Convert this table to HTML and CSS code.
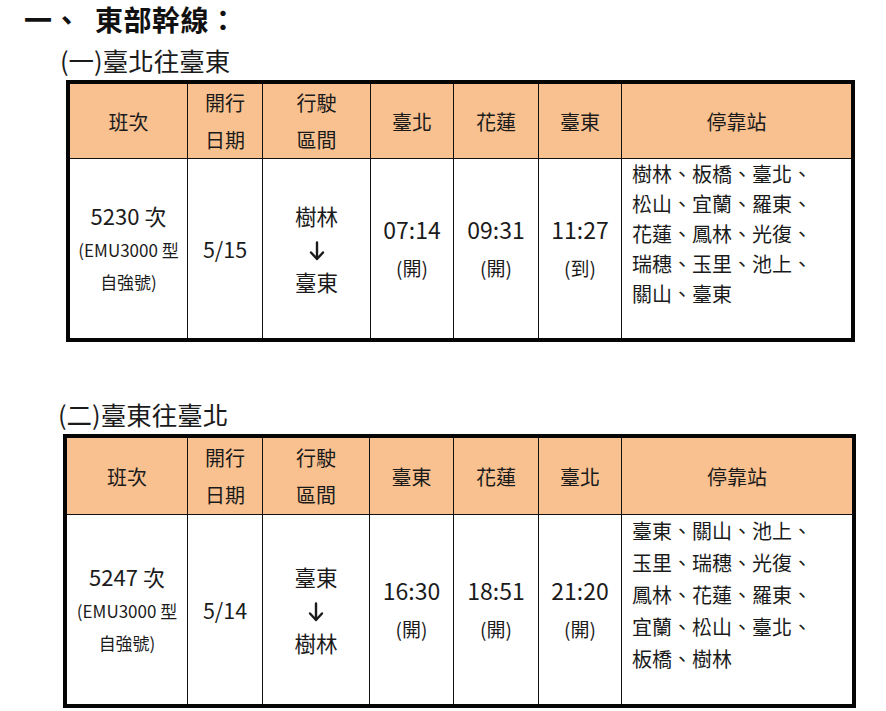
FILE: index.html
```html
<!DOCTYPE html>
<html lang="zh-Hant">
<head>
<meta charset="utf-8">
<link rel="stylesheet" href="styles.css">
</head>
<body>
<div class="page">
  <h1 class="title"><span class="num">一、</span>東部幹線：</h1>
  <h2 class="sub sub1">(一)臺北往臺東</h2>
  <table class="tt t1">
    <colgroup><col class="c1"><col class="c2"><col class="c3"><col class="c4"><col class="c5"><col class="c6"><col class="c7"></colgroup>
    <thead>
      <tr>
        <th>班次</th><th class="two">開行<br>日期</th><th class="two">行駛<br>區間</th><th>臺北</th><th>花蓮</th><th>臺東</th><th>停靠站</th>
      </tr>
    </thead>
    <tbody>
      <tr>
        <td class="train"><span class="tno">5230 次</span><br><span class="ttype">(EMU3000 型<br>自強號)</span></td>
        <td class="date">5/15</td>
        <td class="route">樹林<br><svg class="arr" width="16" height="20" viewBox="0 0 16 20" aria-hidden="true"><path d="M8 1.5V18M2 11.5L8 18L14 11.5" fill="none" stroke="#1b1b1b" stroke-width="2.4" stroke-linecap="round" stroke-linejoin="round"/></svg><br>臺東</td>
        <td class="time"><span class="hm">07:14</span><br><span class="kind">(開)</span></td>
        <td class="time"><span class="hm">09:31</span><br><span class="kind">(開)</span></td>
        <td class="time"><span class="hm">11:27</span><br><span class="kind">(到)</span></td>
        <td class="stops">樹林、板橋、臺北、<br>松山、宜蘭、羅東、<br>花蓮、鳳林、光復、<br>瑞穗、玉里、池上、<br>關山、臺東</td>
      </tr>
    </tbody>
  </table>
  <h2 class="sub sub2">(二)臺東往臺北</h2>
  <table class="tt t2">
    <colgroup><col class="c1"><col class="c2"><col class="c3"><col class="c4"><col class="c5"><col class="c6"><col class="c7"></colgroup>
    <thead>
      <tr>
        <th>班次</th><th class="two">開行<br>日期</th><th class="two">行駛<br>區間</th><th>臺東</th><th>花蓮</th><th>臺北</th><th>停靠站</th>
      </tr>
    </thead>
    <tbody>
      <tr>
        <td class="train train2"><span class="tno">5247 次</span><br><span class="ttype">(EMU3000 型<br>自強號)</span></td>
        <td class="date">5/14</td>
        <td class="route">臺東<br><svg class="arr" width="16" height="20" viewBox="0 0 16 20" aria-hidden="true"><path d="M8 1.5V18M2 11.5L8 18L14 11.5" fill="none" stroke="#1b1b1b" stroke-width="2.4" stroke-linecap="round" stroke-linejoin="round"/></svg><br>樹林</td>
        <td class="time time2"><span class="hm">16:30</span><br><span class="kind">(開)</span></td>
        <td class="time time2"><span class="hm">18:51</span><br><span class="kind">(開)</span></td>
        <td class="time time2"><span class="hm">21:20</span><br><span class="kind">(開)</span></td>
        <td class="stops">臺東、關山、池上、<br>玉里、瑞穗、光復、<br>鳳林、花蓮、羅東、<br>宜蘭、松山、臺北、<br>板橋、樹林</td>
      </tr>
    </tbody>
  </table>
</div>
</body>
</html>
```

FILE: styles.css
```css
html, body {
  margin: 0;
  padding: 0;
  background: #ffffff;
}
body {
  font-family: "Noto Sans CJK TC", "Noto Sans", sans-serif;
  color: #1b1b1b;
  width: 886px;
  height: 711px;
  overflow: hidden;
}
.page {
  display: flex;
  flex-direction: column;
  align-items: flex-start;
}
.title {
  margin: 0;
  padding-top: 2px;
  padding-left: 24px;
  font-size: 28px;
  line-height: 34px;
  font-weight: 700;
  letter-spacing: 0.5px;
  color: #111;
}
.title .num {
  margin-right: 14px;
}
.sub {
  margin: 0;
  font-size: 25.5px;
  font-weight: 400;
  line-height: 32px;
  color: #1b1b1b;
}
.sub1 {
  margin-left: 60px;
  margin-top: 8px;
}
.sub2 {
  margin-left: 58px;
  margin-top: 56px;
}
.tt {
  border-collapse: separate;
  border-spacing: 0;
  border: 4px solid #050505;
  table-layout: fixed;
  box-sizing: border-box;
}
.tt th, .tt td {
  box-sizing: border-box;
  padding: 0;
  text-align: center;
  vertical-align: middle;
  border-right: 1px solid #111;
  font-weight: 400;
}
.tt th:last-child, .tt td:last-child {
  border-right: none;
}
.tt th {
  background: #f9c190;
  border-bottom: 1px solid #111;
  font-size: 20px;
  line-height: 37px;
}
.t1 {
  margin-left: 66px;
  margin-top: 4px;
  width: 789px;
}
.t2 {
  margin-left: 63px;
  margin-top: 4px;
  width: 793px;
}
.t1 .c1 { width: 118px; }
.t1 .c2 { width: 75px; }
.t1 .c3 { width: 108px; }
.t1 .c4 { width: 83px; }
.t1 .c5 { width: 85px; }
.t1 .c6 { width: 83px; }
.t1 .c7 { width: 229px; }
.t2 .c1 { width: 121px; }
.t2 .c2 { width: 75px; }
.t2 .c3 { width: 107px; }
.t2 .c4 { width: 84px; }
.t2 .c5 { width: 85px; }
.t2 .c6 { width: 83px; }
.t2 .c7 { width: 230px; }
.t1 th { height: 75px; }
.t2 th { height: 77px; }
.t1 td { height: 179px; }
.t2 td { height: 189px; }
.train {
  line-height: 32px;
}
.train2 {
  padding-top: 8px;
}
.tno {
  font-size: 22px;
}
.ttype {
  font-size: 17px;
}
.date {
  font-size: 21.5px;
}
.route {
  font-size: 21.5px;
  line-height: 33px;
}
.arr {
  display: inline-block;
  vertical-align: -3px;
}
.time {
  line-height: 36px;
}
.time2 {
  padding-top: 6px;
}
.hm {
  font-size: 23px;
}
.kind {
  font-size: 19px;
}
.tt td.stops {
  text-align: left;
  vertical-align: top;
  padding-left: 10px;
  padding-top: 0;
  font-size: 20px;
  line-height: 30px;
  white-space: nowrap;
}
.t2 td.stops {
  line-height: 32px;
}
```
